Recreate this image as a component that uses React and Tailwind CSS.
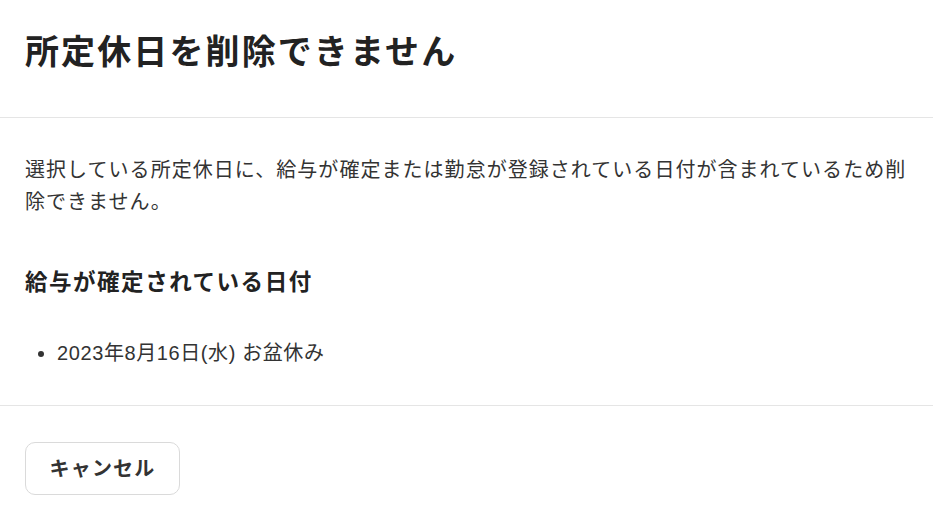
export default function App() {
  const font = { fontFamily: '"Liberation Sans", "Noto Sans CJK JP", sans-serif' };
  return (
    <div className="w-[933px] h-[516px] bg-white overflow-hidden text-[#333333]" style={font}>
      <div className="border-b border-[#e5e5e5] px-[25px] pt-[28px] pb-[41px]">
        <h1 className="text-[34px] leading-[48px] font-bold tracking-[0.062em] text-[#222222]">
          所定休日を削除できません
        </h1>
      </div>
      <div className="border-b border-[#e5e5e5] pl-[25px] pr-[15px] pt-[36px] pb-[36px]">
        <p className="text-[20px] leading-[32px] tracking-[0.052em]">
          選択している所定休日に、給与が確定または勤怠が登録されている日付が含まれているため削除できません。
        </p>
        <h2 className="mt-[49px] text-[22.5px] leading-[32px] font-bold tracking-[0.068em] text-[#222222]">
          給与が確定されている日付
        </h2>
        <ul className="mt-[38px] list-disc pl-[32px] text-[20px] leading-[32px] tracking-[0.03em]">
          <li>2023年8月16日(水) お盆休み</li>
        </ul>
      </div>
      <div className="px-[25px] pt-[36px]">
        <button className="w-[155px] h-[53px] rounded-[10px] border border-[#dadada] bg-white text-[20px] font-bold tracking-[0.06em] text-[#333333]">
          キャンセル
        </button>
      </div>
    </div>
  );
}
